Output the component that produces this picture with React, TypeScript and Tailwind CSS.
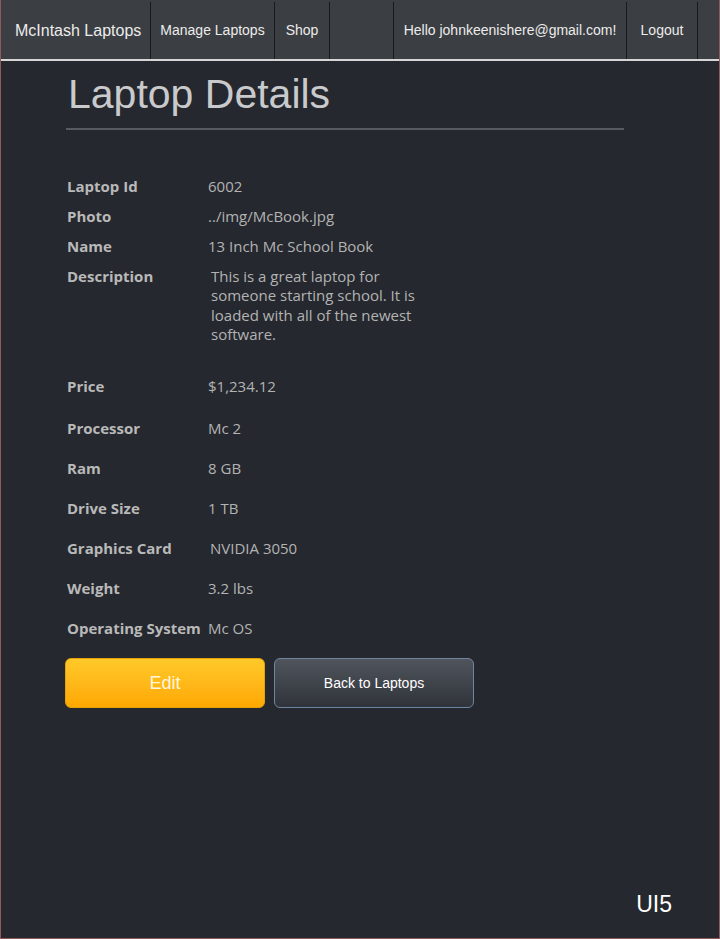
import React from 'react';

const details: { label: string; value: string; row: string; valueClass?: string }[] = [
    { label: 'Laptop Id', value: '6002', row: 'h-[30px]' },
    { label: 'Photo', value: '../img/McBook.jpg', row: 'h-[30px]' },
    { label: 'Name', value: '13 Inch Mc School Book', row: 'h-[30px]' },
];

const specs: { label: string; value: string; row: string; valueClass?: string }[] = [
    { label: 'Price', value: '$1,234.12', row: 'h-[43px]' },
    { label: 'Processor', value: 'Mc 2', row: 'h-[40px]' },
    { label: 'Ram', value: '8 GB', row: 'h-[40px]' },
    { label: 'Drive Size', value: '1 TB', row: 'h-[40px]' },
    { label: 'Graphics Card', value: 'NVIDIA 3050', row: 'h-[40px]', valueClass: 'pl-[2px]' },
    { label: 'Weight', value: '3.2 lbs', row: 'h-[40px]' },
    { label: 'Operating System', value: 'Mc OS', row: 'h-[40px]' },
];

function DetailRow({ label, value, row, valueClass }: { label: string; value: string; row: string; valueClass?: string }) {
    return (
        <div className={`flex items-center ${row}`}>
            <div className="w-[141px] shrink-0 font-bold text-[#b9b9b9]">{label}</div>
            <div className={`text-[#b3b3b3] ${valueClass ?? ''}`}>{value}</div>
        </div>
    );
}

export default function App() {
    return (
        <div className="relative h-[939px] overflow-hidden bg-[#25282e] border-x border-b border-[#8e5a5a] font-['Liberation_Sans',Arial,sans-serif]">
            {/* top nav */}
            <nav className="flex h-[61px] pt-[2px] bg-[#3b3e42] border-b-2 border-[#d6d6d6] text-[#ececec] text-[14px]">
                <div className="w-[150px] shrink-0 flex items-center pl-[14px] text-[16px] border-r border-[#17191b]">
                    McIntash Laptops
                </div>
                <div className="w-[124px] shrink-0 flex items-center justify-center border-r border-[#17191b]">Manage Laptops</div>
                <div className="w-[55px] shrink-0 flex items-center justify-center border-r border-[#17191b]">Shop</div>
                <div className="w-[64px] shrink-0 border-r border-[#17191b]" />
                <div className="w-[233px] shrink-0 flex items-center justify-center border-r border-[#17191b]">Hello johnkeenishere@gmail.com!</div>
                <div className="w-[71px] shrink-0 flex items-center justify-center border-r border-[#17191b]">Logout</div>
                <div className="flex-1" />
            </nav>

            <main className="pl-[65px] w-[623px]">
                <h1 className="mt-[10px] pl-[2px] text-[41px] leading-[46px] text-[#c9cacc]">Laptop Details</h1>
                <hr className="mt-[11px] border-0 h-[2px] bg-[#565a61]" />

                <div className="mt-[41px] pl-px font-['Open_Sans','Noto_Sans',sans-serif] text-[15px]">
                    {details.map((d) => (
                        <DetailRow key={d.label} {...d} />
                    ))}
                    <div className="flex h-[104px]">
                        <div className="w-[141px] shrink-0 leading-[30px] font-bold text-[#b9b9b9]">Description</div>
                        <div className="w-[218px] pt-[6px] pl-[3px] leading-[19.4px] text-[#b3b3b3]">
                            This is a great laptop for someone starting school. It is loaded with all of the newest software.
                        </div>
                    </div>
                    {specs.map((d) => (
                        <DetailRow key={d.label} {...d} />
                    ))}
                </div>

                <div className="mt-[10px] flex gap-[9px] -ml-px">
                    <button className="w-[200px] h-[50px] rounded-[6px] border border-[#e3a208] bg-gradient-to-b from-[#ffc928] to-[#ffa800] text-[18px] text-[#fff6dc]">
                        Edit
                    </button>
                    <button className="w-[200px] h-[50px] rounded-[6px] border border-[#6f84a0] bg-gradient-to-b from-[#50555d] to-[#30343a] text-[14px] text-white">
                        Back to Laptops
                    </button>
                </div>
            </main>

            <div className="absolute right-[47px] bottom-[17px] text-[23px] text-white">UI5</div>
        </div>
    );
}
